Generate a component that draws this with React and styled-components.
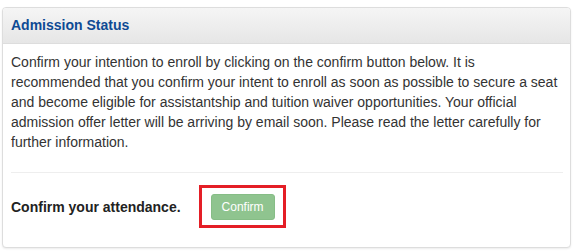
import styled, { createGlobalStyle } from "styled-components";

const GlobalStyle = createGlobalStyle`
  html, body {
    margin: 0;
    padding: 0;
    background: #fff;
  }
  body {
    font-family: "Liberation Sans", Arial, Helvetica, sans-serif;
    font-size: 14px;
    line-height: 20px;
    color: #333;
  }
`;

// page wrapper, panel sits a little in from the window edges
const Page = styled.div`
  padding: 7px 6px 4px 2px;
`;

const Panel = styled.div`
  border: 1px solid #ddd;
  border-radius: 4px;
  background: #fff;
  box-shadow: 0 1px 2px rgba(0, 0, 0, 0.08);
  overflow: hidden;
`;

const Heading = styled.div`
  background: linear-gradient(to bottom, #f5f5f5 0%, #e6e6e6 100%);
  border-bottom: 1px solid #ddd;
  padding: 7px 8px 8px 8px;
`;

const Title = styled.h3`
  margin: 0;
  font-size: 14px;
  line-height: 20px;
  font-weight: bold;
  color: #0e4a94;
`;

const Body = styled.div`
  padding: 8px 7px 8px 8px;
`;

const Message = styled.p`
  margin: 0 0 20px 0;
`;

const Divider = styled.hr`
  margin: 0;
  border: 0;
  border-top: 1px solid #eee;
`;

const AttendRow = styled.div`
  display: flex;
  align-items: center;
  gap: 18px;
  padding: 12px 0 11px 0;
`;

const Label = styled.strong`
  font-weight: bold;
  color: #222;
`;

// red annotation box around the button
const Highlight = styled.div`
  border: 3px solid #e41e26;
  padding: 6px 8px 5px 9px;
  display: flex;
`;

const ConfirmButton = styled.button`
  font-family: "Liberation Sans", Arial, Helvetica, sans-serif;
  font-size: 12px;
  line-height: 16px;
  padding: 4px 10px;
  border: 1px solid #86bd86;
  border-radius: 3px;
  background: #8fc48f;
  color: #fff;
  cursor: not-allowed;
`;

const App = () => {
  return (
    <>
      <GlobalStyle />
      <Page>
        <Panel>
          <Heading>
            <Title>Admission Status</Title>
          </Heading>
          <Body>
            <Message>
              Confirm your intention to enroll by clicking on the confirm button
              below. It is recommended that you confirm your intent to enroll as
              soon as possible to secure a seat and become eligible for
              assistantship and tuition waiver opportunities. Your official
              admission offer letter will be arriving by email soon. Please read
              the letter carefully for further information.
            </Message>
            <Divider />
            <AttendRow>
              <Label>Confirm your attendance.</Label>
              <Highlight>
                <ConfirmButton disabled>Confirm</ConfirmButton>
              </Highlight>
            </AttendRow>
          </Body>
        </Panel>
      </Page>
    </>
  );
};

export default App;
